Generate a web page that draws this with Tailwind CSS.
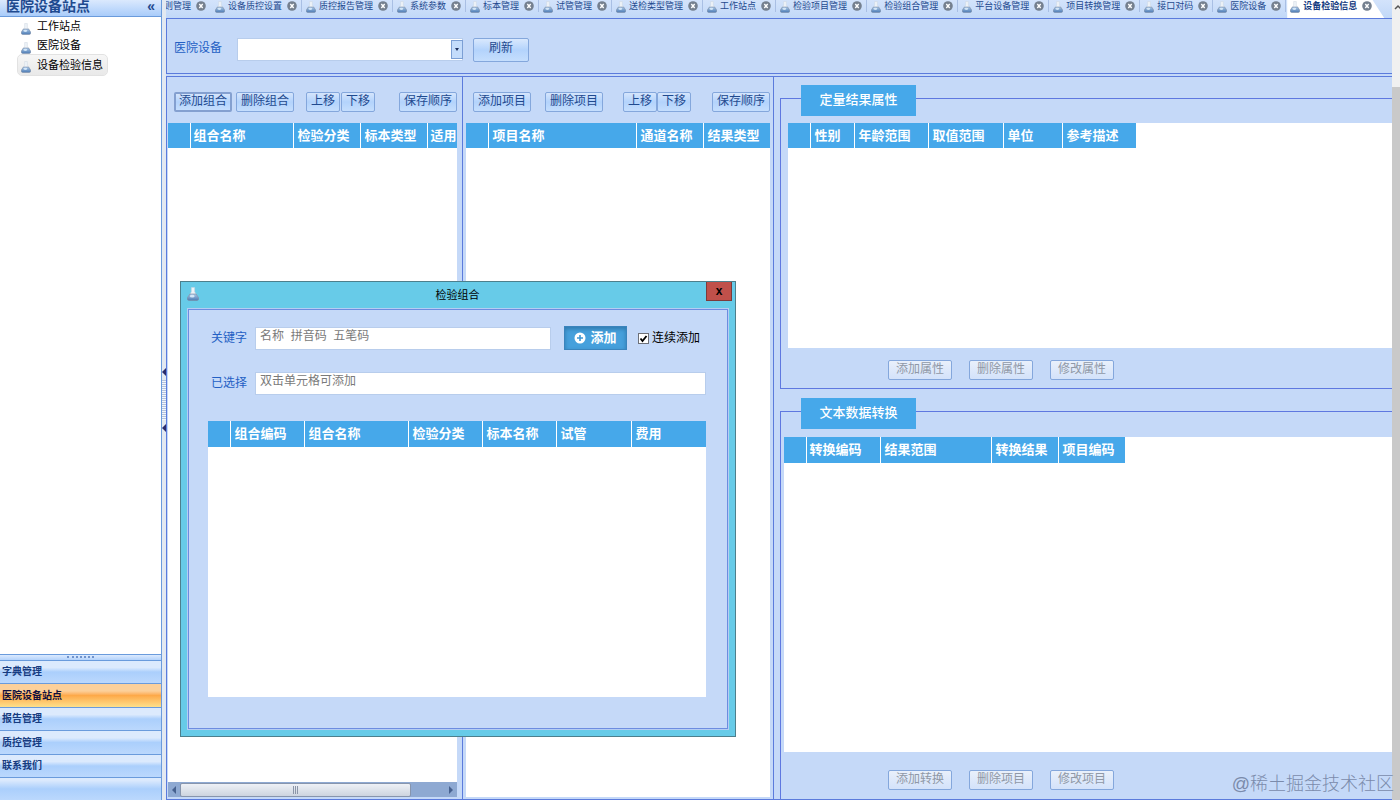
<!DOCTYPE html>
<html lang="zh-CN">
<head>
  <meta charset="UTF-8">
  <meta name="viewport" content="width=device-width, initial-scale=1.0">
  <title>设备检验信息</title>
  <script src="https://cdn.jsdelivr.net/npm/@tailwindcss/browser@4"></script>
  <style>
    body {
      font-family: 'Liberation Sans', 'Noto Sans CJK SC', sans-serif;
    }
  </style>
</head>
<body class="h-screen overflow-hidden flex bg-[#c5d9f8] text-xs text-[#1f4a8f] whitespace-nowrap">
  <!-- Shared icons -->
  <svg class="absolute w-0 h-0">
    <defs>
      <linearGradient id="liquid" x1="0" y1="0" x2="0" y2="1">
        <stop offset="0" stop-color="#a9c6e6"/>
        <stop offset="1" stop-color="#4d7cb5"/>
      </linearGradient>
    </defs>
    <symbol id="flask" viewBox="0 0 11 13">
      <path d="M4 .5h3v4l3 5q1 2-1 2H2q-2 0-1-2l3-5z" fill="#eef3f8" stroke="#c9d3de" stroke-width=".5"/>
      <path d="M2.600 6.500h5.800l2.200 3.400q.6 2.600-1.400 2.600H1.800q-2 0-1.400-2.600z" fill="url(#liquid)" stroke="#7a8ba3" stroke-width=".6"/>
      <ellipse cx="4.800" cy="8.500" rx="2.200" ry="1.200" fill="#d3e6f7"/>
    </symbol>
    <symbol id="close" viewBox="0 0 10 10">
      <circle cx="5" cy="5" r="4.800" fill="#75808f"/>
      <path d="M3.300 3l3.400 4M6.700 3l-3.400 4" stroke="#fff" stroke-width="1.400"/>
    </symbol>
  </svg>

  <!-- Sidebar -->
  <aside class="w-[161px] shrink-0 flex flex-col bg-white">
    <div class="h-[17px] shrink-0 flex items-center justify-between pl-1.5 pr-1.5 pb-1 bg-linear-to-b from-[#dbe9fd] to-[#a9ccfa] border-b border-[#6a9bdc]">
      <h1 class="text-sm leading-4 font-bold">医院设备站点</h1>
      <button class="text-sm leading-4 font-bold" aria-label="收起">«</button>
    </div>
    <ul class="grow pl-[18px] text-[11px] leading-[17px] text-black">
      <li class="flex w-fit items-center gap-1.5 h-[19px] pl-[3px] pr-1"><svg class="w-2.5 h-3 mt-1"><use href="#flask"/></svg><a href="#station">工作站点</a></li>
      <li class="flex w-fit items-center gap-1.5 h-[19px] pl-[3px] pr-1"><svg class="w-2.5 h-3 mt-1"><use href="#flask"/></svg><a href="#device">医院设备</a></li>
      <li class="flex w-fit items-center gap-1.5 h-5 pl-[3px] pr-1 rounded-sm bg-linear-to-b from-[#f6f6f6] to-[#e9e9e9] outline outline-[#e2e2e2]"><svg class="w-2.5 h-3 mt-1"><use href="#flask"/></svg><a href="#info">设备检验信息</a></li>
    </ul>
    <div class="h-1.5 shrink-0 flex justify-center bg-linear-to-b from-[#dceafe] to-[#b3d2fb] border-t border-[#6a9bdc]">
      <div class="w-[27px] h-0.5 mt-px border-t-2 border-dotted border-[#7093cc]"></div>
    </div>
    <nav class="h-[140px] shrink-0 flex flex-col text-[10px] font-bold text-[#163b80] bg-[#b5d4fc]">
      <a href="#dict" class="h-[23px] flex items-center pl-0.5 border-t border-[#6a9bdc] bg-linear-to-b from-[#dceafd] from-30% via-[#abcffc] via-50% to-[#bbd8fd]">字典管理</a>
      <a href="#site" class="h-6 flex items-center pl-0.5 border-t border-[#6a9bdc] bg-linear-to-b from-[#fcd09a] from-30% via-[#fda948] via-50% to-[#fde08a] text-[#10103f]">医院设备站点</a>
      <a href="#report" class="h-[23px] flex items-center pl-0.5 border-t border-[#6a9bdc] bg-linear-to-b from-[#dceafd] from-30% via-[#abcffc] via-50% to-[#bbd8fd]">报告管理</a>
      <a href="#qc" class="h-6 flex items-center pl-0.5 border-t border-[#6a9bdc] bg-linear-to-b from-[#dceafd] from-30% via-[#abcffc] via-50% to-[#bbd8fd]">质控管理</a>
      <a href="#contact" class="h-[23px] flex items-center pl-0.5 border-t border-[#6a9bdc] bg-linear-to-b from-[#dceafd] from-30% via-[#abcffc] via-50% to-[#bbd8fd]">联系我们</a>
      <div class="grow border-t border-[#6a9bdc] bg-linear-to-b from-[#dceafd] from-10% via-[#abcffc] to-[#bbd8fd]"></div>
    </nav>
  </aside>

  <!-- Splitter -->
  <div class="w-[5px] shrink-0 flex flex-col items-center justify-center gap-1 bg-[#e3e9f1] border-l border-[#6a9bdc]">
    <svg class="w-1 h-2" viewBox="0 0 4 8"><path d="M4 0v8L0 4z" fill="#2b2b6b"/></svg>
    <div class="w-1 h-10 bg-[repeating-linear-gradient(to_bottom,#b4c3dc_0_1px,#f4f7fb_1px_2px)]"></div>
    <svg class="w-1 h-2" viewBox="0 0 4 8"><path d="M4 0v8L0 4z" fill="#2b2b6b"/></svg>
  </div>

  <main class="grow min-w-0 flex flex-col">
    <!-- Tabs -->
    <div id="tabs" class="h-[18px] shrink-0 flex overflow-hidden text-[9px] leading-3 bg-linear-to-b from-[#d3e3fb] to-[#c1d8f8]"></div>

    <!-- Filter bar -->
    <form class="h-14 shrink-0 flex items-start pt-[19px] pl-[7px] border border-r-0 border-[#5b7bdc]">
      <label for="device" class="w-[63px] leading-[21px] text-[#2460c4]">医院设备</label>
      <div class="relative">
        <select id="device" class="w-[226px] h-[23px] appearance-none bg-white border border-[#b8cdec]"><option></option></select>
        <span class="absolute right-0 top-0.5 w-3 h-[19px] flex items-center justify-center border border-[#7c9fd4] bg-[#c4dcfb] pointer-events-none">
          <svg class="w-1 h-[3px]" viewBox="0 0 4 3"><path d="M0 0h4L2 3z" fill="#1d2f5e"/></svg>
        </span>
      </div>
      <button type="button" class="w-14 h-6 ml-2.5 pb-1 rounded-xs border border-[#84a7dc] bg-linear-to-b from-[#d9e8fd] via-[#b3d3fc] to-[#c5defd]">刷新</button>
    </form>

    <div class="grow min-h-0 mt-0.5 flex border-y border-[#5b7bdc]">
      <!-- Groups -->
      <section class="w-[297px] shrink-0 flex flex-col border-x border-[#5b7bdc] px-px pb-0.5">
        <div class="h-[46px] shrink-0 flex items-start pt-[15px] pl-1.5">
          <button class="w-[58px] h-5 pb-1 leading-[14px] rounded-xs border-2 border-[#84a0d0] bg-linear-to-b from-[#d5e5fc] via-[#b3d3fc] to-[#c5defd]">添加组合</button>
          <button class="w-[58px] h-5 pb-1 leading-4 ml-1 rounded-xs border border-[#84a7dc] bg-linear-to-b from-[#d5e5fc] via-[#b3d3fc] to-[#c5defd]">删除组合</button>
          <button class="w-[34px] h-5 pb-1 leading-4 ml-3 rounded-xs border border-[#84a7dc] bg-linear-to-b from-[#d5e5fc] via-[#b3d3fc] to-[#c5defd]">上移</button>
          <button class="w-[34px] h-5 pb-1 leading-4 ml-px rounded-xs border border-[#84a7dc] bg-linear-to-b from-[#d5e5fc] via-[#b3d3fc] to-[#c5defd]">下移</button>
          <button class="w-[58px] h-5 pb-1 leading-4 ml-6 rounded-xs border border-[#84a7dc] bg-linear-to-b from-[#d5e5fc] via-[#b3d3fc] to-[#c5defd]">保存顺序</button>
        </div>
        <div class="grow min-h-0 mr-1 bg-white overflow-hidden">
          <table class="w-[290px] table-fixed text-[13px] text-left text-white bg-[#46a8ea]">
            <tr class="h-[25px]">
              <th class="w-[22px]"></th>
              <th class="w-[103px] pl-[3px] border-l border-white">组合名称</th>
              <th class="w-[67px] pl-1 border-l border-white">检验分类</th>
              <th class="w-[67px] pl-1 border-l border-white">标本类型</th>
              <th class="pl-[3px] border-l border-white">适用</th>
            </tr>
          </table>
        </div>
        <div class="h-[15px] shrink-0 mr-1 flex items-center bg-[#8ea9d2]">
          <svg class="w-3 h-2" viewBox="0 0 12 8"><path d="M8 0v8L4 4z" fill="#46618f"/></svg>
          <div class="w-[231px] h-3.5 flex items-center justify-center gap-px rounded-xs border border-[#8795ad] bg-linear-to-b from-[#eef1f6] to-[#cdd4df]">
            <i class="w-px h-2 bg-[#8b95a8]"></i><i class="w-px h-2 bg-[#8b95a8]"></i><i class="w-px h-2 bg-[#8b95a8]"></i>
          </div>
          <svg class="w-3 h-2 ml-auto" viewBox="0 0 12 8"><path d="M4 0v8l4-4z" fill="#46618f"/></svg>
        </div>
      </section>

      <!-- Items -->
      <section class="w-[311px] shrink-0 flex flex-col border-r border-[#5b7bdc] pl-[3px] pr-[3px] pb-0.5">
        <div class="h-[46px] shrink-0 flex items-start pt-[15px] pl-[7px]">
          <button class="w-[58px] h-5 pb-1 leading-4 rounded-xs border border-[#84a7dc] bg-linear-to-b from-[#d5e5fc] via-[#b3d3fc] to-[#c5defd]">添加项目</button>
          <button class="w-[58px] h-5 pb-1 leading-4 ml-3.5 rounded-xs border border-[#84a7dc] bg-linear-to-b from-[#d5e5fc] via-[#b3d3fc] to-[#c5defd]">删除项目</button>
          <button class="w-[34px] h-5 pb-1 leading-4 ml-5 rounded-xs border border-[#84a7dc] bg-linear-to-b from-[#d5e5fc] via-[#b3d3fc] to-[#c5defd]">上移</button>
          <button class="w-[34px] h-5 pb-1 leading-4 rounded-xs border border-[#84a7dc] bg-linear-to-b from-[#d5e5fc] via-[#b3d3fc] to-[#c5defd]">下移</button>
          <button class="w-[58px] h-5 pb-1 leading-4 ml-[21px] rounded-xs border border-[#84a7dc] bg-linear-to-b from-[#d5e5fc] via-[#b3d3fc] to-[#c5defd]">保存顺序</button>
        </div>
        <div class="grow bg-white">
          <table class="w-[304px] table-fixed text-[13px] text-left text-white bg-[#46a8ea]">
            <tr class="h-[25px]">
              <th class="w-[22px]"></th>
              <th class="w-[148px] pl-1 border-l border-white">项目名称</th>
              <th class="w-[67px] pl-1 border-l border-white">通道名称</th>
              <th class="w-[67px] pl-1 border-l border-white">结果类型</th>
            </tr>
          </table>
        </div>
      </section>

      <div class="grow min-w-0 flex flex-col gap-[22px] pt-[21px] pl-1.5">
        <!-- Quantitative result properties -->
        <section class="shrink-0 flex flex-col border border-r-0 border-[#5f78e0]">
          <h2 class="w-[115px] h-[31px] -mt-3.5 ml-5 pb-0.5 flex items-center justify-center text-[13px] font-medium text-white bg-[#46a8ea]">定量结果属性</h2>
          <div class="h-[225px] mt-[7px] ml-[7px] bg-white">
            <table class="w-[348px] table-fixed text-[13px] text-left text-white bg-[#46a8ea]">
              <tr class="h-[25px]">
                <th class="w-[22px]"></th>
                <th class="w-11 pl-1 border-l border-white">性别</th>
                <th class="w-[74px] pl-1 border-l border-white">年龄范围</th>
                <th class="w-[75px] pl-1 border-l border-white">取值范围</th>
                <th class="w-[59px] pl-1 border-l border-white">单位</th>
                <th class="w-[74px] pl-1 border-l border-white">参考描述</th>
              </tr>
            </table>
          </div>
          <div class="h-10 flex items-start gap-[17px] pt-3 pl-[107px] text-[#8f98a6]">
            <button disabled class="w-16 h-5 pb-1 leading-4 rounded-xs border border-[#84a7dc] bg-linear-to-b from-[#e9f0fb] to-[#d3e2fa]">添加属性</button>
            <button disabled class="w-16 h-5 pb-1 leading-4 rounded-xs border border-[#84a7dc] bg-linear-to-b from-[#e9f0fb] to-[#d3e2fa]">删除属性</button>
            <button disabled class="w-16 h-5 pb-1 leading-4 rounded-xs border border-[#84a7dc] bg-linear-to-b from-[#e9f0fb] to-[#d3e2fa]">修改属性</button>
          </div>
        </section>

        <!-- Text data conversion -->
        <section class="grow flex flex-col border-l border-t border-[#5f78e0]">
          <h2 class="w-[115px] h-[31px] -mt-3.5 ml-5 pb-0.5 flex items-center justify-center text-[13px] font-medium text-white bg-[#46a8ea]">文本数据转换</h2>
          <div class="grow mt-2 ml-[3px] bg-white">
            <table class="w-[341px] table-fixed text-[13px] text-left text-white bg-[#46a8ea]">
              <tr class="h-[26px]">
                <th class="w-[22px]"></th>
                <th class="w-[74px] pl-[3px] border-l border-white">转换编码</th>
                <th class="w-[111px] pl-1 border-l border-white">结果范围</th>
                <th class="w-[67px] pl-1 border-l border-white">转换结果</th>
                <th class="w-[67px] pl-1 border-l border-white">项目编码</th>
              </tr>
            </table>
          </div>
          <div class="h-[47px] shrink-0 flex items-start gap-[17px] pt-[18px] pl-[107px] text-[#8f98a6]">
            <button disabled class="w-16 h-5 pb-1 leading-4 rounded-xs border border-[#84a7dc] bg-linear-to-b from-[#e9f0fb] to-[#d3e2fa]">添加转换</button>
            <button disabled class="w-16 h-5 pb-1 leading-4 rounded-xs border border-[#84a7dc] bg-linear-to-b from-[#e9f0fb] to-[#d3e2fa]">删除项目</button>
            <button disabled class="w-16 h-5 pb-1 leading-4 rounded-xs border border-[#84a7dc] bg-linear-to-b from-[#e9f0fb] to-[#d3e2fa]">修改项目</button>
          </div>
        </section>
      </div>
    </div>
  </main>

  <!-- Page scrollbar -->
  <div class="w-2 shrink-0 flex flex-col bg-[#c9c9c9]">
    <div class="h-[87px] bg-[#f0f0f0] flex justify-end pt-1">
      <svg class="w-1.5 h-1.5" viewBox="0 0 6 6"><path d="M1 5l3-3 3 3" fill="none" stroke="#555" stroke-width="1.500"/></svg>
    </div>
  </div>

  <div class="absolute right-1.5 bottom-1 text-lg leading-6 font-light text-[#7b8bab]">@稀土掘金技术社区</div>

  <!-- Add group dialog -->
  <div role="dialog" aria-labelledby="dialogTitle" class="absolute left-[180px] top-[281px] w-[556px] flex flex-col border border-[#4d7f8c] bg-[#67cbe8] px-1.5 pb-1.5">
    <div class="h-[26px] flex items-start text-black">
      <svg class="w-3 h-3.5 mt-[5px]"><use href="#flask"/></svg>
      <h2 id="dialogTitle" class="grow pl-2.5 pt-[3px] leading-5 text-[11px] text-center">检验组合</h2>
      <button class="w-[26px] h-[19px] -mr-[3px] bg-[#c0504a] border border-t-0 border-[#7d3a3a] text-xs leading-4 font-bold" aria-label="关闭">x</button>
    </div>
    <div class="border border-[#b5cdf3]">
      <div class="flex flex-col pt-4 pb-[31px] pl-[19px] pr-[21px] border border-[#6d8ce0] bg-[#c5d9f8]">
        <div class="flex items-center h-6">
          <label for="keyword" class="w-[47px] pl-[3px] text-[#2460c4]">关键字</label>
          <input id="keyword" type="text" placeholder="名称  拼音码  五笔码" class="w-[296px] h-[23px] pl-1 pb-1 bg-white border border-[#b8cdec] placeholder:text-[#7a7a7a]">
          <button class="w-[63px] h-6 ml-[13px] flex items-center justify-center gap-1 text-[13px] font-bold text-white bg-[#46a0dc] border border-[#3a84bd] inset-shadow-sm inset-shadow-[#2f79ad]">
            <svg class="w-3 h-3" viewBox="0 0 12 12"><circle cx="6" cy="6" r="5.500" fill="#fff"/><path d="M6 3v6M3 6h6" stroke="#3f97d3" stroke-width="1.600"/></svg>
            添加
          </button>
          <span class="relative ml-[11px] w-[11px] h-[11px]">
            <input id="keepAdding" type="checkbox" checked class="peer block w-[11px] h-[11px] appearance-none bg-white border border-[#6d7078]">
            <svg class="absolute inset-0 w-[11px] h-[11px] pointer-events-none hidden peer-checked:block" viewBox="0 0 11 11"><path d="M2.500 5.500l2 2.500 4-5" fill="none" stroke="#000" stroke-width="1.800"/></svg>
          </span>
          <label for="keepAdding" class="pl-[3px] text-black">连续添加</label>
        </div>
        <div class="flex items-center h-6 mt-[21px]">
          <label for="selected" class="w-[47px] pl-[3px] text-[#2460c4]">已选择</label>
          <input id="selected" type="text" placeholder="双击单元格可添加" class="grow h-[23px] pl-1 pb-1 bg-white border border-[#b8cdec] placeholder:text-[#7a7a7a]">
        </div>
        <div class="h-[276px] mt-[26px] bg-white">
          <table class="w-full table-fixed text-[13px] text-left text-white bg-[#46a8ea]">
            <tr class="h-[26px]">
              <th class="w-[22px]"></th>
              <th class="w-[74px] pl-1 border-l border-white">组合编码</th>
              <th class="w-[104px] pl-1 border-l border-white">组合名称</th>
              <th class="w-[74px] pl-1 border-l border-white">检验分类</th>
              <th class="w-[74px] pl-1 border-l border-white">标本名称</th>
              <th class="w-[75px] pl-1 border-l border-white">试管</th>
              <th class="pl-1 border-l border-white">费用</th>
            </tr>
          </table>
        </div>
      </div>
    </div>
  </div>

  <script>
    const tabs = ['设备质控设置', '质控报告管理', '系统参数', '标本管理', '试管管理', '送检类型管理', '工作站点', '检验项目管理', '检验组合管理', '平台设备管理', '项目转换管理', '接口对码', '医院设备'];
    const closeButton = '<button class="ml-[5px] mt-px w-2.5 h-2.5" aria-label="关闭"><svg class="w-2.5 h-2.5"><use href="#close"/></svg></button>';

    // First tab is scrolled half out of view
    let html = `<div class="w-[49px] shrink-0 flex items-start justify-end overflow-hidden pr-[9px]"><a href="#" class="shrink-0">则管理</a>${closeButton}</div>`;
    tabs.forEach(tab => {
      html += `
        <div class="shrink-0 flex items-start pr-1">
          <svg class="w-2.5 h-3 mr-[3px] mt-px"><use href="#flask"/></svg>
          <a href="#">${tab}</a>
          ${closeButton}
          <i class="w-px h-3 ml-1 bg-[#a9bfe4]"></i>
        </div>`;
    });
    // Active tab with slanted right edge
    html += `
      <div class="shrink-0 -ml-[3px] pl-[3px] w-[97px] flex items-start bg-white font-bold text-[#163b80] [clip-path:polygon(0_0,88%_0,100%_100%,0_100%)]">
        <svg class="w-2.5 h-3 mr-[3px] mt-px"><use href="#flask"/></svg>
        <a href="#">设备检验信息</a>
        ${closeButton}
      </div>`;
    document.getElementById('tabs').innerHTML = html;
  </script>
</body>
</html>
